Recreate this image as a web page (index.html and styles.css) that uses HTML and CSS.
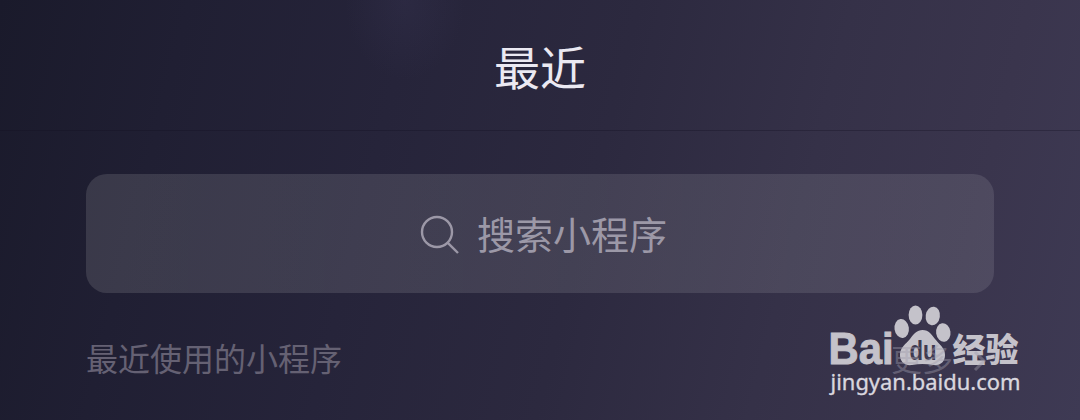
FILE: index.html
```html
<!DOCTYPE html>
<html lang="zh-CN">
<head>
<meta charset="utf-8">
<title>最近</title>
<link rel="stylesheet" href="styles.css">
</head>
<body>
<main class="panel">
  <header class="header"><h1 class="title">最近</h1></header>
  <div class="search">
    <svg class="search-icon" viewBox="0 0 40 40"><circle cx="17" cy="17" r="15"/><path d="M27.800 27.800 38 38"/></svg>
    <span class="search-label">搜索小程序</span>
  </div>
  <section class="recent">
    <h2 class="recent-title">最近使用的小程序</h2>
    <div class="more"><span>更多</span><svg class="chevron" viewBox="0 0 14 22"><path d="M2 2 11 11 2 20"/></svg></div>
  </section>
  <svg class="watermark" viewBox="820 300 210 100">
    <g class="mark">
      <text class="latin" x="828.500" y="364" textLength="65" lengthAdjust="spacingAndGlyphs">Bai</text>
      <ellipse cx="901.700" cy="328.500" rx="7.200" ry="9.500" transform="rotate(-8 901.700 328.500)"/>
      <ellipse cx="915.500" cy="315" rx="6.900" ry="9.500"/>
      <ellipse cx="932.800" cy="316" rx="7.100" ry="9.400" transform="rotate(8 932.800 316)"/>
      <ellipse cx="943.300" cy="332.500" rx="7.200" ry="9.300" transform="rotate(-8 943.300 332.500)"/>
      <path d="M922.500 330C929 330 932 335 935 339C939 344 945 348 945 355C945 362 940 366 933 365C926 363.500 919 363.500 912 365C904 366 899.500 361 900 354C900.500 347 906 344 910 339C914 333.500 917 330 922.500 330Z"/>
      <text class="hanzi" x="952.500" y="361.500" textLength="66" lengthAdjust="spacingAndGlyphs">经验</text>
    </g>
    <text class="du" x="909.500" y="360" textLength="27" lengthAdjust="spacingAndGlyphs">du</text>
    <text class="url" x="830.500" y="390" textLength="190" lengthAdjust="spacingAndGlyphs">jingyan.baidu.com</text>
  </svg>
</main>
</body>
</html>
```
FILE: styles.css
```css
* { box-sizing: border-box; }
body { margin: 0; font-family: "Noto Sans CJK SC", sans-serif; }
.panel {
  position: relative;
  width: 1080px;
  height: 420px;
  overflow: hidden;
  background:
    radial-gradient(ellipse 60px 80px at 405px 0, rgba(65, 61, 95, .22), transparent),
    linear-gradient(104deg, #1a1a2b 0%, #201f33 16%, #26243a 35%, #2c293f 54%, #353148 72%, #3a354d 87%, #3e3a54 100%);
}
.header {
  height: 131px;
  display: flex;
  justify-content: center;
  border-bottom: 1px solid rgba(20, 17, 35, .32);
}
.title { margin: 0; color: #ebe9f2; font-size: 46px; font-weight: 400; line-height: 130px; }
.search {
  width: 908px;
  height: 119px;
  margin: 43px 86px 0;
  padding-left: 7px;
  border-radius: 21px;
  background: linear-gradient(90deg, rgba(255, 255, 248, .12), rgba(255, 255, 255, .1));
  display: flex;
  align-items: center;
  justify-content: center;
  gap: 17px;
  color: #9c98a7;
}
.search-icon { width: 40px; height: 40px; margin-top: 2px; fill: none; stroke: currentColor; stroke-width: 2.4; }
.search-label { padding-bottom: 2px; font-size: 38px; line-height: 56px; }
.recent {
  margin: 39px 86px 0;
  display: flex;
  justify-content: space-between;
  align-items: center;
  color: #656173;
}
.recent-title { margin: 0; font-size: 32px; font-weight: 400; line-height: 48px; }
.more {
  position: relative;
  z-index: 2;
  margin-right: 7px;
  display: flex;
  align-items: center;
  gap: 20px;
  color: rgba(160, 157, 172, .42);
  font-size: 31px;
  line-height: 48px;
}
.more span { padding-top: 2px; }
.chevron { width: 14px; height: 22px; margin-top: 7px; fill: none; stroke: currentColor; stroke-width: 3; }
.watermark { position: absolute; left: 820px; top: 300px; width: 210px; height: 100px; }
.mark { fill: #c4c2ca; }
.latin { font: bold 44px "Liberation Sans", sans-serif; stroke: #c4c2ca; stroke-width: 1; }
.hanzi { font: 900 33px "Noto Sans CJK SC", sans-serif; }
.du { font: bold 28px "Liberation Sans", sans-serif; fill: #3f3a50; }
.url { font: 400 22.5px "Noto Sans", sans-serif; fill: #d9d7df; stroke: #d9d7df; stroke-width: .35; }
```
